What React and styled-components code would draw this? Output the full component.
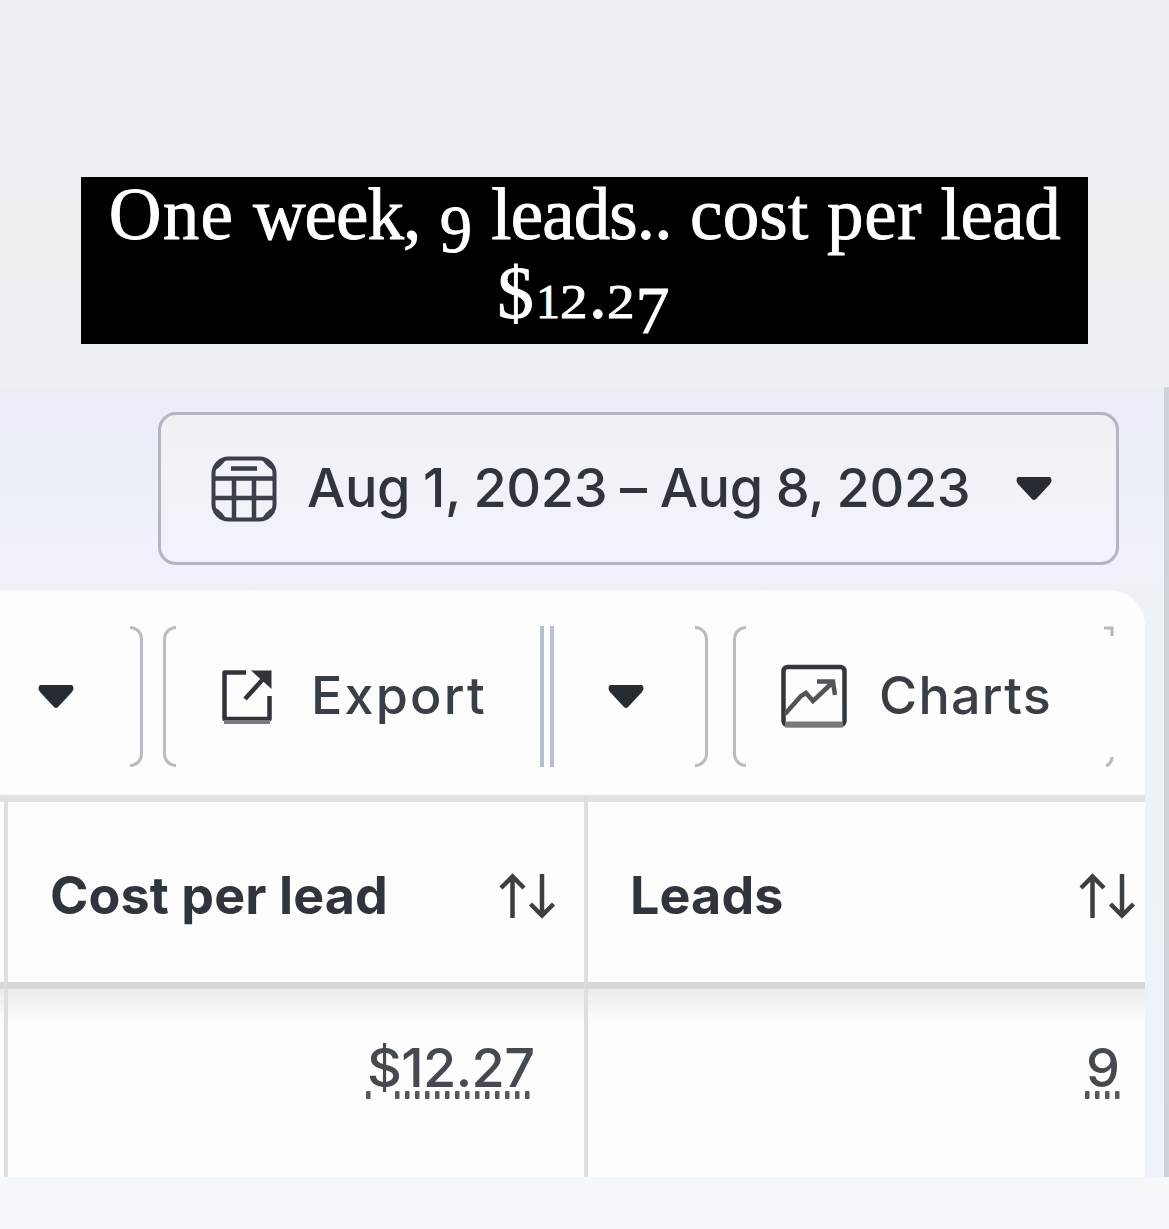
import React from 'react';
import styled, { createGlobalStyle } from 'styled-components';

const GlobalStyle = createGlobalStyle`
* { box-sizing: border-box; }

body {
    margin: 0;
    background: #f5f8fb;
}
`

const Page = styled.div`
width: 1169px;
height: 1229px;
overflow: hidden;
display: flex;
flex-direction: column;
background: linear-gradient(#f5f8fb 1190px, #f6f6fb);
color: #30353d;
font-family: Inter, "Liberation Sans", sans-serif;
`

const Hero = styled.header`
height: 387px;
padding: 177px 81px 0 81px;
background: linear-gradient(#ebeff3, #edf1f4);
`

const Caption = styled.h1`
margin: 0;
height: 167px;
width: 1007px;
display: flex;
flex-direction: column;
align-items: center;
background: #000;
color: #fff;
font-family: "Liberation Serif", serif;
font-weight: 400;
font-size: 73px;
line-height: 75px;
white-space: nowrap;
-webkit-text-stroke: 0.9px #fff;
`

const CaptionLine = styled.div`
height: 79px;
word-spacing: ${props => props.$gap || 0}px;
letter-spacing: ${props => props.$spacing || 0}px;
`

const Word = styled.span`
letter-spacing: ${props => props.$spacing || 0}px;
`

const Figure = styled.span`
display: inline-block;
line-height: 1;
font-size: ${props => props.$size || 68}px;
vertical-align: ${props => props.$drop || 0}px;
transform: scaleX(${props => props.$stretch || 1});
`

const Screen = styled.main`
height: 790px;
display: flex;
border-right: 5px solid #ced3d9;
background: linear-gradient(#ebedf8, #ecf0f6 90px, #f0f2fb 180px, #eef2f6 203px, #eff2f9);
`

const Content = styled.div`
width: 1145px;
display: flex;
flex-direction: column;
`

const DateRow = styled.div`
height: 203px;
padding: 25px 26px 0 158px;
display: flex;
`

const DateButton = styled.div`
width: 961px;
height: 153px;
padding: 0 64px 0 50px;
display: flex;
align-items: center;
border: 3px solid #b3b5c1;
border-radius: 18px;
background: linear-gradient(#eef1f4, #f1f3f8 60%, #f0f3fd);
`

const DateText = styled.div`
flex: 1;
margin-left: 30px;
padding-bottom: 3px;
font-weight: 500;
font-size: 54px;
letter-spacing: -0.4px;
word-spacing: -1px;
white-space: nowrap;
`

const Panel = styled.section`
flex: 1;
display: flex;
flex-direction: column;
background: #fdfdfd;
border-top-right-radius: 36px;
`

const Toolbar = styled.div`
height: 205px;
padding: 36px 31px 0 38px;
display: flex;
`

const ToolGroup = styled.div`
height: 141px;
width: ${props => props.$width}px;
padding-left: ${props => props.$pad || 0}px;
margin-right: ${props => props.$gap || 0}px;
display: flex;
align-items: center;
justify-content: space-between;
`

const ToolLabel = styled.div`
flex: 1;
margin-left: ${props => props.$gap}px;
padding-bottom: 3px;
font-weight: 500;
font-size: 52px;
letter-spacing: ${props => props.$spacing || 0}px;
color: #3a3f45;
`

const Bracket = styled.div`
width: 13px;
height: 141px;
border: 3px solid #b9bcc1;
${props => props.$side === 'left'
        ? 'border-right: 0; border-radius: 14px 0 0 14px;'
        : 'border-left: 0; border-radius: 0 14px 14px 0;'}
`

const Divider = styled.div`
width: 14px;
height: 141px;
border-left: 4px solid #b9c0c8;
border-right: 4px solid #b9c0c8;
`

const Corners = styled.div`
height: 141px;
display: flex;
flex-direction: column;
justify-content: space-between;
`

const Table = styled.div`
flex: 1;
display: grid;
grid-template-columns: 4px 580px 1fr;
grid-template-rows: 194px 1fr;
`

const Cell = styled.div`
display: flex;
padding-left: ${props => props.$left || 0}px;
padding-right: ${props => props.$right || 0}px;
border-left: ${props => (props.$edge ? 0 : 4)}px solid #dedede;
`

const HeadCell = styled(Cell)`
align-items: center;
justify-content: space-between;
border-top: 7px solid #e2e2e2;
border-bottom: 7px solid #d8d8d8;
padding-top: 7px;
font-weight: 700;
font-size: 52px;
letter-spacing: 0.1px;
white-space: nowrap;
`

const ValueCell = styled(Cell)`
justify-content: flex-end;
padding-top: 46px;
background: linear-gradient(#ececec, #f7f7f7 22px, #fdfdfd 36px);
font-size: 54px;
font-weight: 500;
letter-spacing: -0.6px;
color: #454a50;
`

const Value = styled.div`
width: ${props => props.$width}px;
height: 66px;
display: flex;
flex-direction: column;
line-height: 66px;

svg {
    flex-shrink: 0;
}
`

const Amount = styled.div`
height: 56px;
margin-left: ${props => props.$shift || 0}px;
white-space: nowrap;
`

const CalendarIcon = () => (
    <svg width="66" height="66" viewBox="0 0 66 66" fill="none" stroke="#3b3f4a" strokeWidth="4.5">
        <path d="M14 2.5H52Q56 9 63.500 14V52Q56 56 52 63.500H14Q10 56 2.500 52V14Q10 9 14 2.500Z" strokeWidth="2.5" />
        <rect x="2.500" y="2.500" width="61" height="61" rx="15" strokeWidth="4" />
        <path d="M20 12.500H46M3 22.500H63M3 42H63M23 23V63M43 23V63" />
    </svg>
)

const Caret = () => (
    <svg width="36" height="24" viewBox="0 0 36 24">
        <path d="M2 0H34Q37 3 34 7L21 21Q18 25 15 21L2 7Q-1 3 2 0Z" fill="#272b32" />
    </svg>
)

const ExportIcon = () => (
    <svg width="52" height="56" viewBox="0 0 52 56" fill="none" stroke="#30343a" strokeWidth="4.5">
        <path d="M25 3.500H3.500V50H48.500V27" strokeLinejoin="round" />
        <path d="M3 53H49" stroke="#777a7e" strokeWidth="4" />
        <path d="M24 30L43 9" />
        <path d="M30 1.500H50.500V20L45 15L36 7Z" fill="#30343a" stroke="none" />
    </svg>
)

const ChartIcon = () => (
    <svg width="66" height="66" viewBox="0 0 66 66" fill="none" stroke="#34383d" strokeWidth="4.5">
        <rect x="2.500" y="3" width="61" height="58" rx="4" />
        <path d="M4 60.500H62" stroke="#77797c" strokeWidth="6" />
        <path d="M4 50L20 32L25 29L32 37L51 19M36 17.500H52L54 31" stroke="#50545a" strokeWidth="4.5" />
    </svg>
)

const SortIcon = () => (
    <svg width="58" height="46" viewBox="0 0 58 46" fill="none" stroke="#3d4043" strokeWidth="4.5">
        <path d="M14.500 45V4M3 15L14.500 3.500L26 15" />
        <path d="M44 1V42M32.500 31L44 42.500L55.500 31" />
    </svg>
)

const Dots = ({ points, width }) => (
    <svg width={width} height="9" viewBox={`0 0 ${width} 9`}>
        {points.map((x) => (
            <rect key={x} x={x} y="0" width="4.500" height="8" rx="1" fill="#55595d" />
        ))}
    </svg>
)

const columns = [
    { title: 'Cost per lead', right: 28 },
    { title: 'Leads', right: 9 },
]

const amountDots = [1, 30, 40, 50, 60, 70, 80, 90, 100, 110, 120, 130, 140, 150, 160]

export default function App() {
    return (
        <Page>
            <GlobalStyle />
            <Hero>
                <Caption>
                    <CaptionLine $gap={0.3}>
                        <Word $spacing={1.3}>One</Word> <Word $spacing={-1}>week,</Word>{' '}
                        <Figure $drop={-13} $stretch={0.95}>9</Figure>{' '}
                        <Word $spacing={-0.9}>leads..</Word> <Word $spacing={0.2}>cost</Word>{' '}
                        <Word $spacing={0.6}>per</Word> <Word $spacing={-0.5}>lead</Word>
                    </CaptionLine>
                    <CaptionLine $spacing={2.3}>
                        $<Figure $size={48}>1</Figure><Figure $size={48} $stretch={1.15}>2</Figure>.<Figure $size={48} $stretch={1.15}>2</Figure><Figure $drop={-15}>7</Figure>
                    </CaptionLine>
                </Caption>
            </Hero>
            <Screen>
                <Content>
                    <DateRow>
                        <DateButton>
                            <CalendarIcon />
                            <DateText>Aug 1, 2023 – Aug 8, 2023</DateText>
                            <Caret />
                        </DateButton>
                    </DateRow>
                    <Panel>
                        <Toolbar>
                            <ToolGroup $width={105} $gap={20}>
                                <Caret />
                                <Bracket $side="right" />
                            </ToolGroup>
                            <ToolGroup $width={391}>
                                <Bracket $side="left" />
                                <ToolGroup $width={362} $pad={44}>
                                    <ExportIcon />
                                    <ToolLabel $gap={38} $spacing={2.2}>Export</ToolLabel>
                                </ToolGroup>
                                <Divider />
                            </ToolGroup>
                            <ToolGroup $width={154} $pad={54} $gap={25}>
                                <Caret />
                                <Bracket $side="right" />
                            </ToolGroup>
                            <ToolGroup $width={381}>
                                <Bracket $side="left" />
                                <ToolGroup $width={356} $pad={34}>
                                    <ChartIcon />
                                    <ToolLabel $gap={32} $spacing={1.3}>Charts</ToolLabel>
                                </ToolGroup>
                                <Corners>
                                    <svg width="10" height="10" viewBox="0 0 10 10"><path d="M0 2H8V10" fill="none" stroke="#b5b9be" strokeWidth="3" /></svg>
                                    <svg width="10" height="10" viewBox="0 0 10 10"><path d="M8 0Q8 6 2 9" fill="none" stroke="#b5b9be" strokeWidth="3" /></svg>
                                </Corners>
                            </ToolGroup>
                        </Toolbar>
                        <Table>
                            <HeadCell $edge />
                            {columns.map((column) => (
                                <HeadCell key={column.title} $left={42} $right={column.right}>
                                    {column.title}
                                    <SortIcon />
                                </HeadCell>
                            ))}
                            <ValueCell $edge />
                            <ValueCell $right={51}>
                                <Value $width={168}>
                                    <Amount $shift={2}>$12.27</Amount>
                                    <Dots points={amountDots} width={168} />
                                </Value>
                            </ValueCell>
                            <ValueCell $right={25}>
                                <Value $width={35}>
                                    <Amount $shift={1}>9</Amount>
                                    <Dots points={[0, 10, 20, 30]} width={35} />
                                </Value>
                            </ValueCell>
                        </Table>
                    </Panel>
                </Content>
            </Screen>
        </Page>
    )
}
